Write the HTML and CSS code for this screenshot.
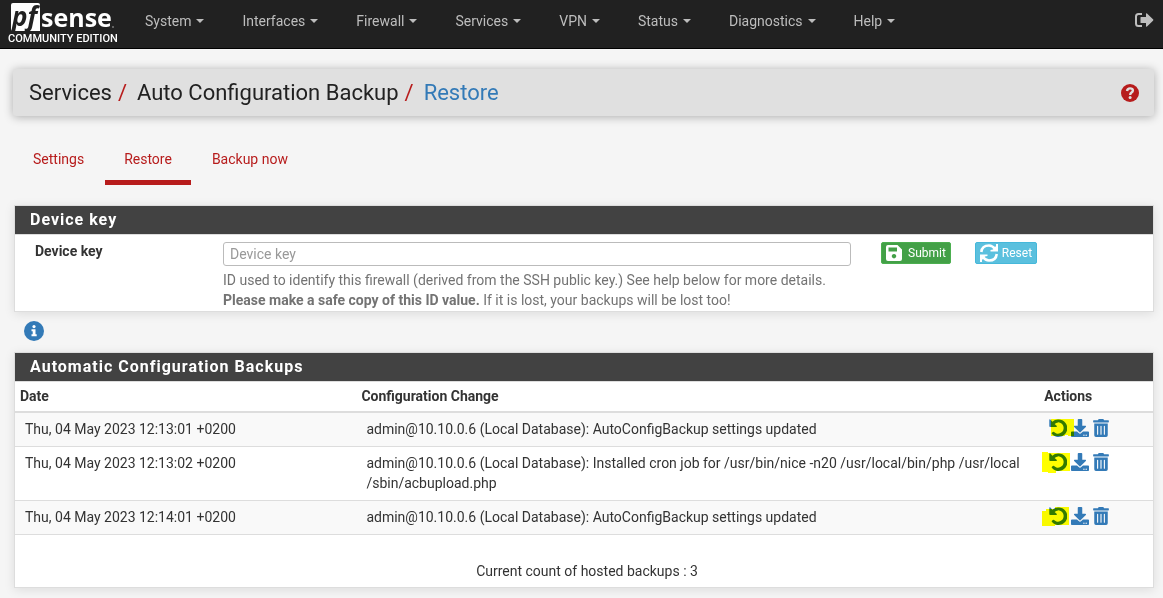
FILE: index.html
```html
<!DOCTYPE html>
<html lang="en">
<head>
<meta charset="utf-8">
<title>Services: Auto Configuration Backup: Restore</title>
<link rel="stylesheet" href="styles.css">
</head>
<body>
<svg class="defs" aria-hidden="true">
  <symbol id="i-undo" viewBox="0 0 512 512"><path d="M24 8Q8 8 8 24v176q0 24 24 24h176q16 0 16-16v-10L160 142Q200 96 256 96a160 160 0 1 1-113 273q-18-16-34 0l-24 24q-16 16 0 32A248 248 0 1 0 256 16Q160 18 96 80L40 12z"/></symbol>
  <symbol id="i-download" viewBox="0 0 512 512"><path d="M216 0h80c13.3 0 24 10.7 24 24v168h87.7c17.8 0 26.7 21.5 14.1 34.1L269.7 378.3c-7.5 7.5-19.8 7.5-27.3 0L90.1 226.1c-12.6-12.6-3.7-34.1 14.1-34.1H192V24c0-13.3 10.7-24 24-24zm296 376v112c0 13.300-10.700 24-24 24H24c-13.300 0-24-10.700-24-24V376c0-13.300 10.700-24 24-24h146.700l49 49c20.100 20.100 52.500 20.100 72.600 0l49-49H488c13.300 0 24 10.700 24 24zm-124 88c0-11-9-20-20-20s-20 9-20 20 9 20 20 20 20-9 20-20zm64 0c0-11-9-20-20-20s-20 9-20 20 9 20 20 20 20-9 20-20z"/></symbol>
  <symbol id="i-trash" viewBox="0 0 448 512"><path d="M32 464a48 48 0 0 0 48 48h288a48 48 0 0 0 48-48V128H32zm272-256a16 16 0 0 1 32 0v224a16 16 0 0 1-32 0zm-96 0a16 16 0 0 1 32 0v224a16 16 0 0 1-32 0zm-96 0a16 16 0 0 1 32 0v224a16 16 0 0 1-32 0zM432 32H312l-9.400-18.700A24 24 0 0 0 281.100 0H166.800a23.720 23.720 0 0 0-21.400 13.300L136 32H16A16 16 0 0 0 0 48v32a16 16 0 0 0 16 16h416a16 16 0 0 0 16-16V48a16 16 0 0 0-16-16z"/></symbol>
</svg>

<header class="navbar">
  <a class="brand" href="#" aria-label="pfSense Community Edition">
    <svg class="logo" viewBox="0 0 108 32">
      <path class="logo-box" d="M5 3h25q2 0 2 2v26H5q-2 0-2-2V5q0-2 2-2z"/>
      <text class="logo-pf" x="4" y="26">pf</text>
      <text class="logo-sense" x="33" y="27">sense</text>
      <circle class="logo-dot" cx="105" cy="27" r="1"/>
    </svg>
    <span class="edition">COMMUNITY EDITION</span>
  </a>
  <nav class="menu">
    <a href="#">System<i class="caret"></i></a>
    <a href="#">Interfaces<i class="caret"></i></a>
    <a href="#">Firewall<i class="caret"></i></a>
    <a href="#">Services<i class="caret"></i></a>
    <a href="#">VPN<i class="caret"></i></a>
    <a href="#">Status<i class="caret"></i></a>
    <a href="#">Diagnostics<i class="caret"></i></a>
    <a href="#">Help<i class="caret"></i></a>
  </nav>
  <a class="logout" href="#" aria-label="Logout">
    <svg width="19" height="14" viewBox="0 0 19 14"><path fill="none" stroke="currentColor" stroke-width="2" d="M7 1H3.500Q1 1 1 3.500v7Q1 13 3.500 13H7"/><path fill="currentColor" d="M5.500 4.500Q5.500 4 6 4h5V1q0-1.200 1-.5l6 5.800q.700.700 0 1.400l-6 5.800q-1 .700-1-.5v-3H6q-.5 0-.5-.5z"/></svg>
  </a>
</header>

<main class="container">
  <div class="page-header">
    <h1>Services<b>/</b><span>Auto Configuration Backup</span><b>/</b><a href="#">Restore</a></h1>
    <a class="help" href="#" aria-label="Help">
      <svg width="18" height="18" viewBox="0 0 18 18"><circle cx="9" cy="9" r="9" fill="currentColor"/><path fill="none" stroke="#e0e0e0" stroke-width="2.400" d="M6 7q.4-2.600 3-2.600 2.900 0 2.900 2.200 0 1.200-1.500 2Q9.200 9.300 9.200 11"/><circle cx="9.100" cy="13.400" r="1.500" fill="#e0e0e0"/></svg>
    </a>
  </div>

  <nav class="tabs">
    <a href="#">Settings</a>
    <a href="#" class="active">Restore</a>
    <a href="#">Backup now</a>
  </nav>

  <form class="panel">
    <h2>Device key</h2>
    <div class="form-row">
      <label for="devkey">Device key</label>
      <div class="field">
        <input id="devkey" type="text" placeholder="Device key">
        <p>ID used to identify this firewall (derived from the SSH public key.) See help below for more details.<br><strong>Please make a safe copy of this ID value.</strong> If it is lost, your backups will be lost too!</p>
      </div>
      <div class="buttons">
        <button type="button" class="btn submit">
          <svg width="16" height="16" viewBox="0 0 16 16"><path fill="currentColor" fill-rule="evenodd" d="M2 0h9.500L16 4.500V14q0 2-2 2H2q-2 0-2-2V2Q0 0 2 0zM2.500 2.500v4h8.500v-4zM8 9a2.200 2.200 0 1 0 .01 0z"/></svg>Submit
        </button>
        <button type="button" class="btn reset">
          <svg width="18" height="18" viewBox="0 0 18 18"><g fill="none" stroke="currentColor" stroke-width="2.600"><path d="M1.300 8Q2 1.500 9 1.500q3.500 0 6.500 4"/><path d="M16.700 10Q16 16.500 9 16.500q-3.500 0-6.500-4"/></g><path fill="currentColor" d="M18 0v7.500h-7.500V6l2.500-.5L16 2V0zM0 18v-7.500h7.500V12l-2.500.5L2 16v2z"/></svg>Reset
        </button>
      </div>
    </div>
  </form>

  <a class="info" href="#" aria-label="Information">
    <svg width="20" height="20" viewBox="0 0 20 20"><circle cx="10" cy="10" r="10" fill="currentColor"/><circle cx="10" cy="5.600" r="1.600" fill="#fff"/><path fill="#fff" d="M7.500 8.300h4v5H12.700v1.900H7.500v-1.900h1.200v-3.100H7.500z"/></svg>
  </a>

  <section class="panel">
    <h2>Automatic Configuration Backups</h2>
    <table>
      <thead>
        <tr><th class="date">Date</th><th class="change">Configuration Change</th><th>Actions</th></tr>
      </thead>
      <tbody>
        <tr>
          <td>Thu, 04 May 2023 12:13:01 +0200</td>
          <td>admin@10.10.0.6 (Local Database): AutoConfigBackup settings updated</td>
          <td><div class="actions">
            <a href="#" aria-label="Restore"><svg width="18" height="18"><use href="#i-undo"/></svg></a>
            <a href="#" aria-label="Download"><svg width="18" height="18"><use href="#i-download"/></svg></a>
            <a href="#" aria-label="Delete"><svg width="16" height="18"><use href="#i-trash"/></svg></a>
            <svg class="mark" viewBox="0 0 34 22"><path d="M9 1h23v17H26v-1h-3v1H9z"/></svg>
          </div></td>
        </tr>
        <tr>
          <td>Thu, 04 May 2023 12:13:02 +0200</td>
          <td>admin@10.10.0.6 (Local Database): Installed cron job for /usr/bin/nice -n20 /usr/local/bin/php /usr/local<wbr>/sbin/acbupload.php</td>
          <td><div class="actions">
            <a href="#" aria-label="Restore"><svg width="18" height="18"><use href="#i-undo"/></svg></a>
            <a href="#" aria-label="Download"><svg width="18" height="18"><use href="#i-download"/></svg></a>
            <a href="#" aria-label="Delete"><svg width="16" height="18"><use href="#i-trash"/></svg></a>
            <svg class="mark" viewBox="0 0 34 22"><path d="M0 0h6v1h22v18h-14v2H6v-1H0z"/></svg>
          </div></td>
        </tr>
        <tr>
          <td>Thu, 04 May 2023 12:14:01 +0200</td>
          <td>admin@10.10.0.6 (Local Database): AutoConfigBackup settings updated</td>
          <td><div class="actions">
            <a href="#" aria-label="Restore"><svg width="18" height="18"><use href="#i-undo"/></svg></a>
            <a href="#" aria-label="Download"><svg width="18" height="18"><use href="#i-download"/></svg></a>
            <a href="#" aria-label="Delete"><svg width="16" height="18"><use href="#i-trash"/></svg></a>
            <svg class="mark" viewBox="0 0 34 22"><path d="M0 5h4V3h9V1h14v18h-14v1H0z"/></svg>
          </div></td>
        </tr>
      </tbody>
    </table>
    <p class="count">Current count of hosted backups : 3</p>
  </section>
</main>
</body>
</html>
```
FILE: styles.css
```css
* { box-sizing: border-box; }
body {
  margin: 0;
  background: #f5f5f5;
  color: #333;
  font: 14px/20px Roboto, "Liberation Sans", sans-serif;
}
a { color: #337ab7; text-decoration: none; }
svg { display: block; }
.defs { position: absolute; width: 0; height: 0; }

.navbar {
  display: flex;
  align-items: flex-start;
  height: 49px;
  padding: 0 9px 0 8px;
  background: #212121;
  border-bottom: 1px solid #000;
}
.brand { width: 118px; color: #fff; }
.logo { width: 108px; height: 32px; overflow: visible; }
.logo-box { fill: #fff; }
.logo-pf { fill: #212121; font: italic 700 26px "Open Sans", sans-serif; }
.logo-sense { fill: #fff; font: 700 25px "Open Sans", sans-serif; }
.logo-dot { fill: #777; }
.edition { display: block; font-size: 11px; line-height: 14px; font-weight: 500; white-space: nowrap; }
.menu { display: flex; flex: 1; }
.menu a { display: flex; align-items: center; padding: 11px 19px; color: #bdbdbd; }
.caret {
  margin-left: 5px;
  border: 4px solid transparent;
  border-top-color: currentColor;
  border-bottom: 0;
}
.logout { padding-top: 13px; color: #bdbdbd; }

.container { padding: 20px 9px 10px 13px; }
.page-header {
  display: flex;
  align-items: center;
  justify-content: space-between;
  height: 47px;
  padding: 0 15px 0 16px;
  background: #e0e0e0;
  border-radius: 3px;
  box-shadow: 0 1px 10px rgba(0, 0, 0, .3);
}
h1 { margin: 0; font-size: 22px; line-height: 24px; font-weight: 400; color: #212121; }
h1 b { margin: 0 10px 0 6px; font-weight: 400; color: #b71c1c; }
.help { color: #b71c1c; }

.tabs { display: flex; gap: 2px; margin: 20px 0 20px 1px; }
.tabs a { padding: 13px 19px 11px; border-bottom: 5px solid transparent; color: #b71c1c; }
.tabs .active { border-color: #b71c1c; }

.panel {
  margin-left: 1px;
  background: #fff;
  border: 1px solid #ddd;
  box-shadow: 0 2px 10px rgba(0, 0, 0, .1);
}
h2 {
  margin: 0;
  padding: 4px 15px;
  background: #424242;
  color: #fff;
  border-bottom: 1px solid #ddd;
  font-size: 16px;
  line-height: 20px;
  font-weight: 700;
  letter-spacing: 1px;
}
.form-row { display: flex; padding: 6px 20px 1px; }
.form-row label { width: 188px; font-weight: 700; }
.field { width: 628px; margin: 1px 30px 0 0; }
.field input {
  display: block;
  width: 100%;
  height: 24px;
  padding: 0 6px;
  border: 1px solid #bbb;
  border-radius: 3px;
  font: inherit;
  background: #fff;
}
.field input::placeholder { color: #999; }
.field p { margin: 4px 0 0; color: #737373; }
.buttons { display: flex; align-items: flex-start; gap: 24px; margin-top: 1px; }
.btn {
  display: flex;
  align-items: center;
  height: 22px;
  padding: 0 4px;
  border: 1px solid;
  border-radius: 2px;
  color: #fff;
  font: 12px/18px Roboto, sans-serif;
}
.submit { gap: 6px; background: #43a047; border-color: #4caf50; }
.reset { gap: 4px; background: #5bc0de; border-color: #46b8da; }

.info { display: block; width: 20px; margin: 9px 0 11px 11px; }

table { width: 100%; border-collapse: collapse; table-layout: fixed; }
th { padding: 4px 5px 5px; text-align: left; font-weight: 700; border-bottom: 2px solid #ddd; }
.date { width: 30%; }
.change { width: 60%; }
td { padding: 6px 10px 7px; vertical-align: top; border-bottom: 1px solid #ddd; }
tbody tr:nth-child(odd) { background: #f9f9f9; }
.actions { position: relative; display: flex; gap: 4px; }
.actions a { fill: currentColor; }
.mark {
  position: absolute;
  left: -7px;
  top: -1px;
  width: 34px;
  height: 22px;
  fill: #ff0;
  mix-blend-mode: multiply;
}
.count { margin: 0; padding: 26px 0 6px 6px; text-align: center; }
```
